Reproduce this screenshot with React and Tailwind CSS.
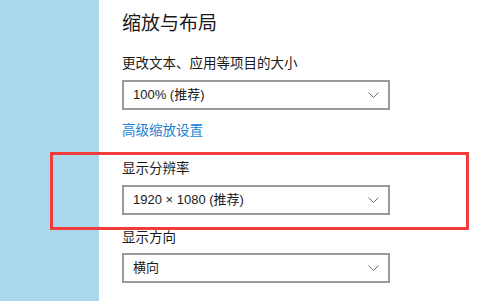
import React from 'react';

const font = { fontFamily: '"Liberation Sans", "Noto Sans CJK SC", sans-serif' };

const Chevron = () => (
    <svg width="11" height="6" viewBox="0 0 11 6" className="shrink-0">
        <path d="M0.5 0.5 L5.5 5.5 L10.5 0.5" fill="none" stroke="#6b6b6b" strokeWidth="1" />
    </svg>
);

const Select = ({ value, className = '' }) => (
    <div className={`w-[268px] h-[30px] border-2 border-[#999999] bg-white flex items-center justify-between pl-[9px] pr-[9px] ${className}`}>
        <span className="text-[13px] leading-[18px] text-[#1a1a1a]">{value}</span>
        <Chevron />
    </div>
);

const App = () => {
    return (
        <div className="relative w-[500px] h-[301px] flex bg-white overflow-hidden" style={font}>
            <div className="w-[99px] h-full bg-[#aad9ed] shrink-0" />

            <div className="flex flex-col pl-[23px] pt-[12px]">
                <h1 className="text-[19px] leading-[24px] text-[#1a1a1a] font-normal">缩放与布局</h1>

                <div className="mt-[19px] text-[13.5px] leading-[18px] text-[#1a1a1a]">更改文本、应用等项目的大小</div>
                <Select value="100% (推荐)" className="mt-[7px]" />

                <a className="mt-[12px] text-[13.5px] leading-[18px] text-[#1a7fd6]">高级缩放设置</a>

                <div className="mt-[20px] text-[13.5px] leading-[18px] text-[#1a1a1a]">显示分辨率</div>
                <Select value="1920 × 1080 (推荐)" className="mt-[7px]" />

                <div className="mt-[14px] text-[13.5px] leading-[18px] text-[#1a1a1a]">显示方向</div>
                <Select value="横向" className="mt-[6px]" />
            </div>

            {/* annotation box */}
            <div className="absolute left-[50px] top-[152px] w-[419px] h-[78px] border-[3px] border-[#f23b3b]" />
        </div>
    );
};

export default App;
